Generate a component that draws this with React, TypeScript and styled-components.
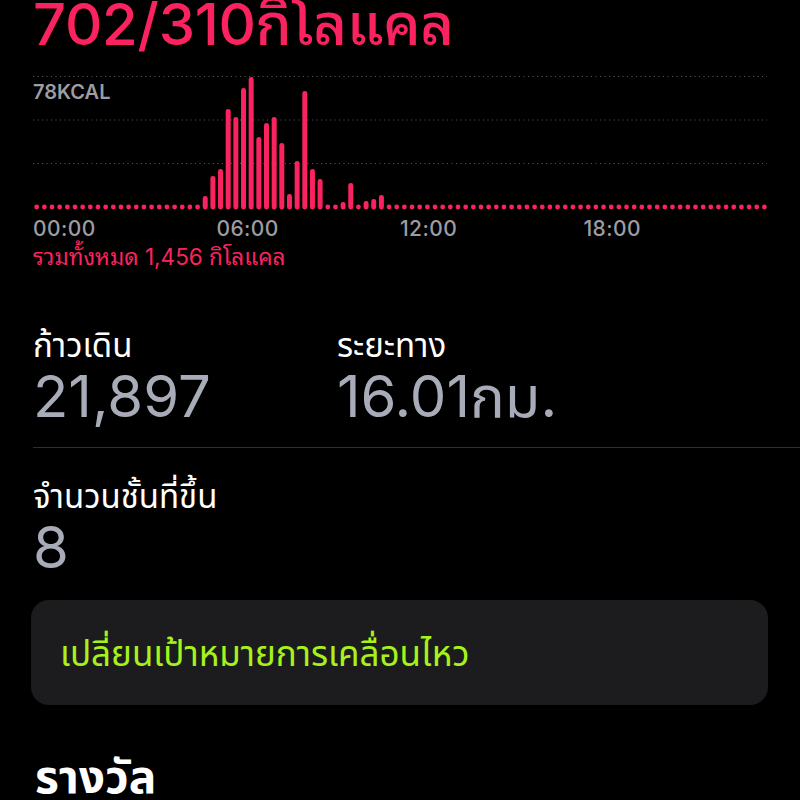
import { createGlobalStyle, styled } from "styled-components";

const GlobalStyle = createGlobalStyle`
    html, body {
        margin: 0;
        padding: 0;
        background: #000;
    }
    body {
        font-family: Inter, "Noto Sans Thai", "Noto Sans", sans-serif;
        color: #fff;
        overflow: hidden;
    }
`;

const PINK = "#fa2360";
const VALUE_GRAY = "#a7acb8";
const AXIS_GRAY = "#9c9ca1";
const LOOPED = `Inter, "Noto Sans Thai Looped", "Noto Sans Thai", sans-serif`;

const Page = styled.div`
    width: 800px;
    height: 800px;
    overflow: hidden;
    display: flex;
    flex-direction: column;

    & > * {
        flex-shrink: 0;
    }
`;

const Section = styled.div`
    padding: 0 32px 0 33px;
`;

const MoveTitle = styled.h1`
    margin: -8px 0 0 0;
    font-family: ${LOOPED};
    font-size: 58px;
    line-height: 64px;
    font-weight: 500;
    color: ${PINK};
    letter-spacing: -0.3px;
    white-space: nowrap;
`;

const ChartWrap = styled.div`
    position: relative;
    margin: 13.5px 0 0 -3px;
    width: 740px;
    height: 142px;
`;

const AxisLabel = styled.span`
    position: absolute;
    left: 3px;
    top: 12px;
    font-size: 20px;
    line-height: 20px;
    font-weight: 600;
    color: ${AXIS_GRAY};
`;

const TimeRow = styled.div`
    display: grid;
    grid-template-columns: repeat(4, 183.5px);
    margin-top: 5px;
    font-size: 21px;
    line-height: 24px;
    font-weight: 500;
    color: ${AXIS_GRAY};
    letter-spacing: 0.4px;
`;

const TotalText = styled.div`
    margin-top: 3px;
    font-family: ${LOOPED};
    font-size: 22.5px;
    line-height: 26px;
    color: ${PINK};
    white-space: nowrap;
`;

const StatGrid = styled.div`
    display: grid;
    grid-template-columns: 304px 1fr;
    margin-top: 53px;
`;

const Stat = styled.div<{ $top?: number }>`
    display: flex;
    flex-direction: column;
    margin-top: ${props => props.$top ?? 0}px;
`;

const StatLabel = styled.div`
    font-size: 33px;
    line-height: 44px;
    color: #fff;
    white-space: nowrap;
`;

const StatValue = styled.div`
    font-size: 58px;
    line-height: 58px;
    color: ${VALUE_GRAY};
    white-space: nowrap;
`;

const Divider = styled.div`
    height: 1px;
    background: #2e2e31;
    margin: 22px 0 0 33px;
`;

const Card = styled.div`
    margin: 24px 32px 0 31px;
    height: 105px;
    border-radius: 18px;
    background: #1c1c1e;
    display: flex;
    align-items: center;
    padding: 6px 0 0 29px;
    box-sizing: border-box;
`;

const CardText = styled.span`
    font-size: 35px;
    color: #a8f21c;
    white-space: nowrap;
`;

const AwardsTitle = styled.h2`
    margin: 46px 0 0 35px;
    font-size: 46px;
    font-weight: 700;
    line-height: 50px;
    white-space: nowrap;
`;

// bar heights above the baseline, one per 15 minutes
const barHeights: Record<number, number> = {
    22: 11, 23: 31, 24: 38, 25: 98, 26: 90, 27: 119, 28: 130, 29: 70,
    30: 84, 31: 90, 32: 64, 33: 13, 34: 46, 35: 116, 36: 38, 37: 28,
    40: 5, 41: 24, 43: 6, 44: 8, 45: 12,
};

const BASE = 137;
const SLOT = 7.66;

function DottedLine({ y }: { y: number }) {
    return (
        <line x1={3} x2={737} y1={y} y2={y}
            stroke="#5a5a5e" strokeWidth={1} strokeDasharray="1 3.5" />
    );
}

function MoveChart() {
    const slots = Array.from({ length: 96 }, (_, i) => i);
    return (
        <ChartWrap>
            <svg width={740} height={142}>
                <DottedLine y={6.5} />
                <DottedLine y={50} />
                <DottedLine y={93.5} />
                {slots.map(i => {
                    const cx = 6.7 + SLOT * i;
                    const h = barHeights[i];
                    if (!h) {
                        return <circle key={i} cx={cx} cy={BASE} r={2.4} fill={PINK} />;
                    }
                    return (
                        <rect key={i} x={cx - 2.5} y={BASE - h} width={5}
                            height={h + 2.4} rx={2.4} fill={PINK} />
                    );
                })}
            </svg>
            <AxisLabel>78KCAL</AxisLabel>
        </ChartWrap>
    );
}

export default function App() {
    return (
        <Page>
            <GlobalStyle />
            <Section>
                <MoveTitle>702/310กิโลแคล</MoveTitle>
                <MoveChart />
                <TimeRow>
                    <span>00:00</span>
                    <span>06:00</span>
                    <span>12:00</span>
                    <span>18:00</span>
                </TimeRow>
                <TotalText>รวมทั้งหมด 1,456 กิโลแคล</TotalText>
                <StatGrid>
                    <Stat>
                        <StatLabel>ก้าวเดิน</StatLabel>
                        <StatValue>21,897</StatValue>
                    </Stat>
                    <Stat>
                        <StatLabel>ระยะทาง</StatLabel>
                        <StatValue>16.01กม.</StatValue>
                    </Stat>
                </StatGrid>
            </Section>
            <Divider />
            <Section>
                <Stat $top={26}>
                    <StatLabel>จำนวนชั้นที่ขึ้น</StatLabel>
                    <StatValue>8</StatValue>
                </Stat>
            </Section>
            <Card>
                <CardText>เปลี่ยนเป้าหมายการเคลื่อนไหว</CardText>
            </Card>
            <AwardsTitle>รางวัล</AwardsTitle>
        </Page>
    );
}
